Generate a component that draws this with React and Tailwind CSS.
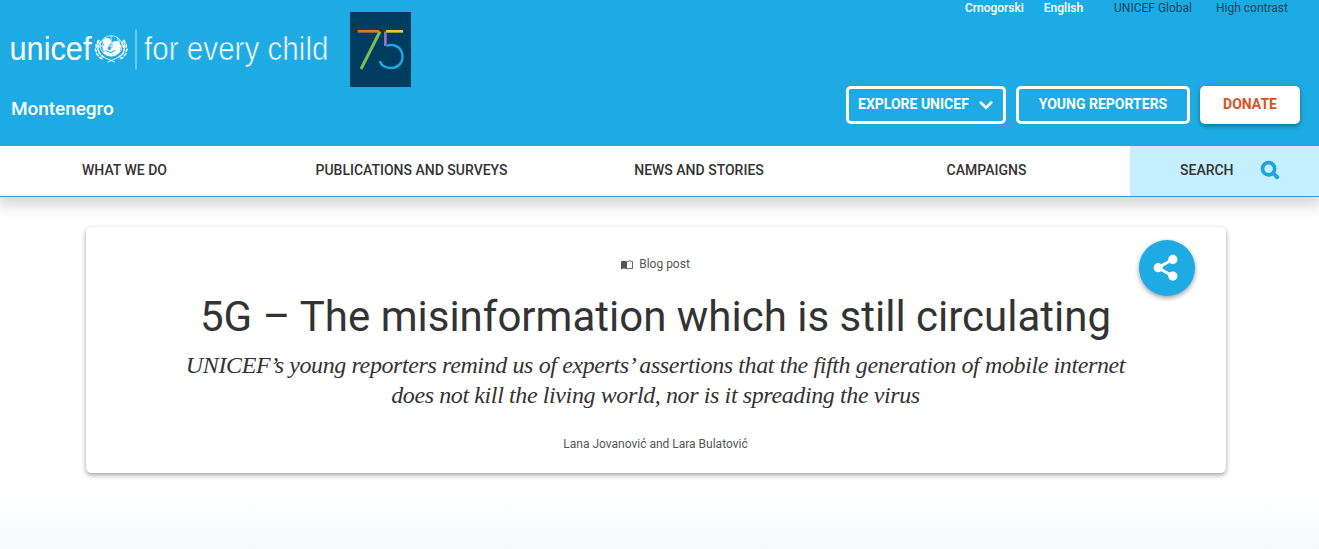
import React from "react";

function Emblem() {
  const leaves = [
    [3.2, 9, -70], [1.8, 13.5, -90], [1.6, 18, -110], [3.2, 22.3, -130], [6.6, 25.6, -150],
  ];
  const spray = (
    <g>
      <path d="M4.5 6.5C1.5 12 2.2 19 6.8 23.4 9.6 26 13.5 27 20 30.5" fill="none" stroke="white" strokeWidth="0.9" />
      {leaves.map(([x, y, r]) => (
        <g key={y} transform={`translate(${x} ${y}) rotate(${r})`}>
          <ellipse cx="0.6" cy="-0.6" rx="2.3" ry="0.85" fill="white" />
          <ellipse cx="0.2" cy="2" rx="2.1" ry="0.8" fill="white" />
        </g>
      ))}
    </g>
  );
  return (
    <g transform="translate(95 22) scale(1 0.93)">
      {spray}
      <g transform="translate(32.4 0) scale(-1 1)">{spray}</g>
      <g fill="none" stroke="white" strokeWidth="0.75">
        <circle cx="16.2" cy="12.8" r="11" />
        <path d="M7 7.2Q16 11 25.4 7.2M16.2 2v22M5.4 13h21.6M10.5 3.5Q4.5 13 10.5 22.2M21.9 3.5Q27.9 13 21.9 22.2" />
      </g>
      <circle cx="12" cy="8.2" r="3.9" fill="white" />
      <circle cx="20.8" cy="11.3" r="3.6" fill="white" />
      <path d="M9 11.5Q6.6 15.5 9.8 18.6L8 20.5Q14 25.5 20 23Q26.5 20 25.8 12Q24 9.5 22.8 13Q20 15.5 18 13.5L15 17.5L12.5 16.5L13.7 11.5Z" fill="white" />
      <path d="M10.5 17.6L16 20L20 17.3" fill="none" stroke="#1eabe3" strokeWidth="1.1" />
    </g>
  );
}

function Logo() {
  return (
    <svg width="340" height="75" viewBox="0 0 340 75" className="block shrink-0 overflow-visible">
      <g fontFamily="'Liberation Sans', Arial, sans-serif" fill="white">
        <text x="9.5" y="47.7" fontSize="32.5" textLength="82" lengthAdjust="spacingAndGlyphs">unicef</text>
        <text x="144" y="47.7" fontSize="32.5" stroke="#1eabe3" strokeWidth="0.7" textLength="184.5" lengthAdjust="spacingAndGlyphs">for every child</text>
      </g>
      <Emblem />
      <path d="M136 17.5v40" stroke="white" strokeOpacity="0.7" strokeWidth="1" />
    </svg>
  );
}

function Anniversary() {
  return (
    <svg width="61" height="75" viewBox="0 0 61 75" className="ml-[10px] block shrink-0">
      <rect width="61" height="75" fill="#003c60" />
      <g fill="none" strokeWidth="2.7">
        <path d="M7.7 19.3H29" stroke="#e0743c" />
        <path d="M30 19.5L11 57" stroke="#76c056" strokeWidth="3" />
        <path d="M36 19.3H53" stroke="#f5c634" />
        <path d="M35.4 19.5V34" stroke="#9a73b8" />
        <path d="M36.5 34C42 31.3 50 34 52 41C54.5 50 48 56 41 56C35 56 31 53 29.8 49" stroke="#1cabe2" strokeWidth="2.4" />
      </g>
    </svg>
  );
}

export default function App() {
  return (
    <div className="flex h-[549px] w-full flex-col overflow-hidden bg-white font-['Roboto','Liberation_Sans',sans-serif] whitespace-nowrap text-[#333]">
      <header className="relative z-20 flex h-[146px] shrink-0 justify-between bg-[#1eabe3]">
        <div className="flex flex-col pt-3">
          <div className="flex">
            <Logo />
            <Anniversary />
          </div>
          <div className="mt-[8px] pl-[11px] text-[19px] leading-7 font-medium tracking-[-0.06px] text-white">Montenegro</div>
        </div>
        <div className="flex flex-col items-end pr-[19px]">
          <div className="flex h-4 pr-3 text-[12px] leading-4">
            <span className="font-medium text-white">Crnogorski</span>
            <span className="ml-5 font-medium text-white">English</span>
            <span className="ml-[31px] text-[#17475c]">UNICEF Global</span>
            <span className="ml-6 text-[#17475c]">High contrast</span>
          </div>
          <div className="mt-[70px] flex gap-[10px] text-[14px] leading-5 font-bold">
            <div className="flex h-[38px] w-[160px] items-center rounded-[5px] border-3 border-white pb-[2px] pl-[9px] text-white">
              EXPLORE UNICEF
              <svg width="14" height="10" viewBox="0 0 14 10" className="mt-[2px] ml-[10px]">
                <path d="M1.7 2.5L7 7.7L12.3 2.5" fill="none" stroke="white" strokeWidth="2.5" strokeLinecap="round" />
              </svg>
            </div>
            <div className="flex h-[38px] w-[174px] items-center justify-center rounded-[5px] border-3 border-white pb-[2px] text-white">YOUNG REPORTERS</div>
            <div className="flex h-[38px] w-[100px] items-center justify-center rounded-[5px] bg-white pb-[2px] text-[#d8531f] shadow-[0_2px_5px_rgba(0,0,0,0.35)]">DONATE</div>
          </div>
        </div>
      </header>
      <nav className="relative z-10 flex h-[51px] shrink-0 border-b border-[#3a9ccb] text-[14px] leading-5 font-medium shadow-[0_4px_14px_4px_rgba(0,0,0,0.17)]">
        <div className="flex w-[249px] justify-center pt-[14px]">WHAT WE DO</div>
        <div className="flex w-[325px] justify-center pt-[14px]">PUBLICATIONS AND SURVEYS</div>
        <div className="flex w-[250px] justify-center pt-[14px]">NEWS AND STORIES</div>
        <div className="flex w-[306px] justify-center pt-[14px] pl-[19px]">CAMPAIGNS</div>
        <div className="flex w-[189px] bg-[#c5eefe] pt-[14px] pl-[50px]">
          SEARCH
          <svg width="20" height="20" viewBox="0 0 20 20" className="ml-[26px]">
            <circle cx="8.6" cy="8.7" r="6.1" fill="none" stroke="#1ea5df" strokeWidth="3.7" />
            <path d="M13.3 13.4L17.2 17.2" stroke="#1ea5df" strokeWidth="4" strokeLinecap="round" />
          </svg>
        </div>
      </nav>
      <main className="flex grow flex-col bg-linear-to-b from-white from-85% to-[#f6fafd] pt-[30px] pl-[86px]">
        <article className="relative flex h-[246px] w-[1140px] flex-col items-center rounded-[5px] bg-white shadow-[0_2px_5px_rgba(0,0,0,0.38)]">
          <div className="mt-[29px] mr-px flex h-4 items-center text-[12px] leading-4 text-[#555]">
            <svg width="12" height="10" viewBox="0 0 12 10" className="mt-px mr-[6px]">
              <path d="M0 1.5Q3 0.2 6 1.5V9.2Q3 8 0 9.2Z" fill="#555" />
              <path d="M6 1.5Q9 0.2 11.5 1.5V8.7Q9 7.8 6 9" fill="none" stroke="#555" strokeWidth="0.9" />
            </svg>
            Blog post
          </div>
          <h1 className="mt-[19px] mr-px text-[42px] leading-[52px] font-normal">5G – The misinformation which is still circulating</h1>
          <p className="mt-[7px] mr-px text-center font-['Liberation_Serif',serif] text-[24px] leading-[30px] tracking-[-0.39px] text-[#333] italic">
            UNICEF’s young reporters remind us of experts’ assertions that the fifth generation of mobile internet
            <br />
            does not kill the living world, nor is it spreading the virus
          </p>
          <div className="mt-[26px] mr-px text-[12px] leading-4 text-[#555]">Lana Jovanović and Lara Bulatović</div>
          <div className="absolute top-[13px] right-[31px] flex h-14 w-14 items-center justify-center rounded-full bg-[#1eabe3] shadow-[0_2px_5px_rgba(0,0,0,0.4)]">
            <svg width="26" height="28" viewBox="0 0 26 28" className="mr-[2px]">
              <path d="M19.7 5.5L5 13.7L19.7 22" fill="none" stroke="white" strokeWidth="3" />
              <g fill="white">
                <circle cx="5.2" cy="13.7" r="4.6" />
                <circle cx="19.8" cy="5.4" r="4.6" />
                <circle cx="19.8" cy="22.1" r="4.6" />
              </g>
            </svg>
          </div>
        </article>
      </main>
    </div>
  );
}
